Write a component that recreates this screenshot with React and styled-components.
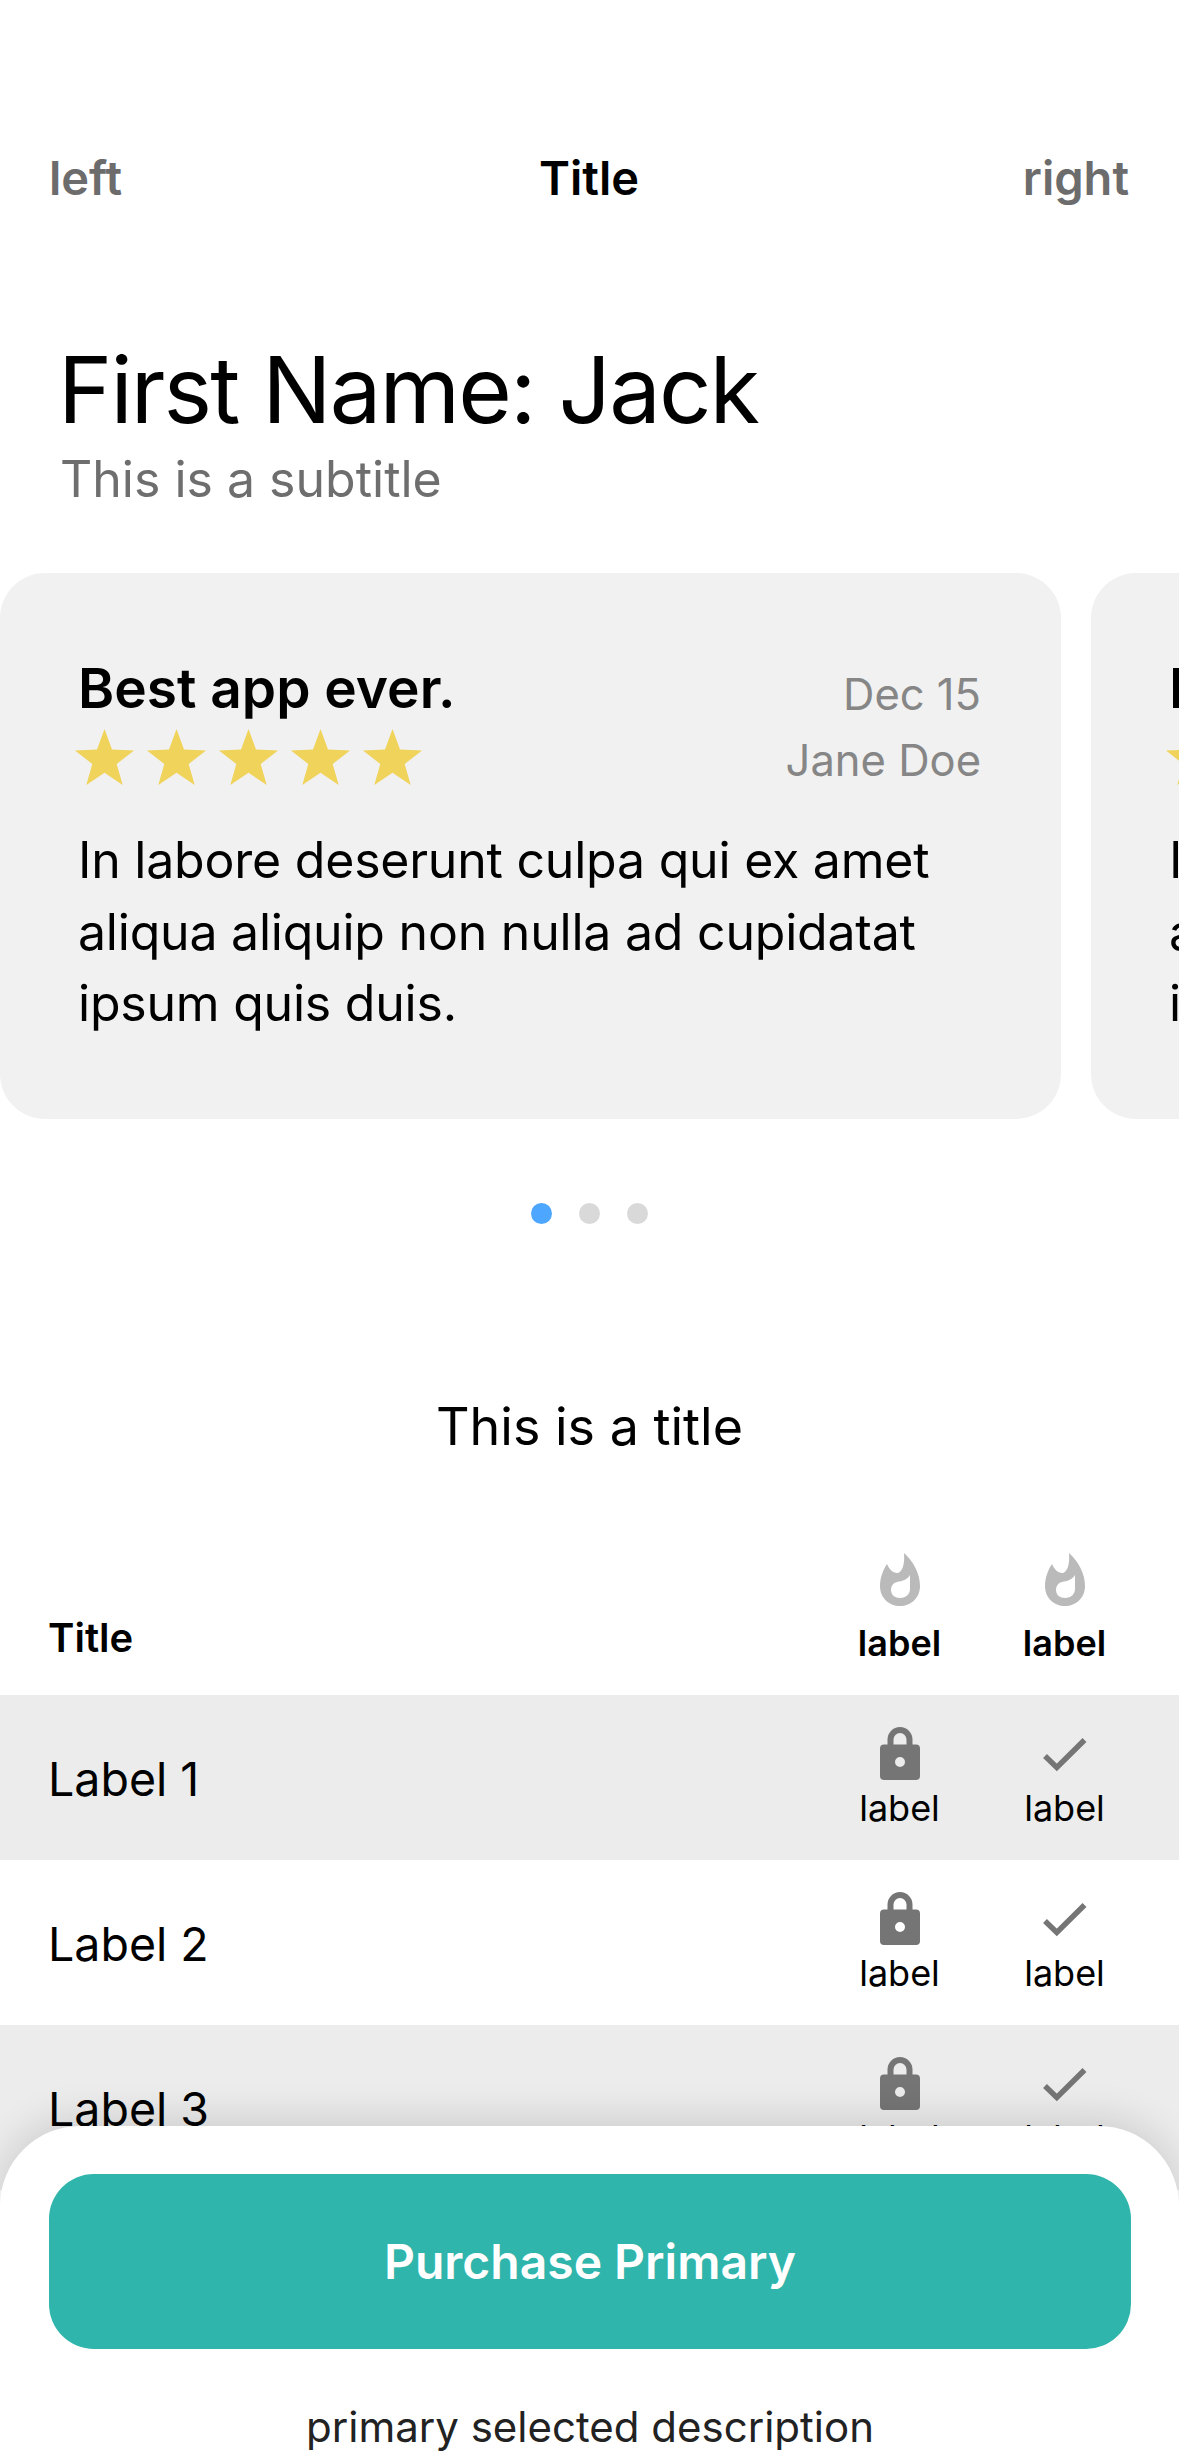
import React from 'react';
import styled, { createGlobalStyle } from 'styled-components';

const GlobalStyle = createGlobalStyle`
  html, body {
    margin: 0;
    padding: 0;
    background: #fff;
  }
  body {
    font-family: Inter, "Noto Sans", "Liberation Sans", sans-serif;
    color: #000;
  }
`;

const Page = styled.div`
  position: relative;
  width: 1179px;
  height: 2454px;
  overflow: hidden;
  background: #fff;
`;

const NavBar = styled.header`
  display: flex;
  align-items: center;
  justify-content: space-between;
  height: 114px;
  margin-top: 120px;
  padding: 0 50px 0 49px;
`;

const NavSide = styled.span`
  width: 200px;
  font-size: 47px;
  font-weight: 600;
  color: #6c6c6c;
  text-align: ${({ $align }) => $align};
`;

const NavTitle = styled.span`
  font-size: 47px;
  font-weight: 600;
  color: #000;
`;

const Intro = styled.section`
  margin-top: 106px;
  padding: 0 60px;
`;

const Heading = styled.h1`
  margin: 0 0 0 -2px;
  font-size: 92px;
  line-height: 100px;
  font-weight: 400;
  letter-spacing: -1.9px;
  color: #000;
`;

const Subtitle = styled.p`
  margin: 9px 0 0;
  font-size: 50px;
  line-height: 60px;
  color: #6e6e6e;
`;

const Carousel = styled.div`
  display: flex;
  gap: 30px;
  margin-top: 64px;
  overflow: hidden;
`;

const ReviewCard = styled.article`
  flex: 0 0 1061px;
  height: 546px;
  box-sizing: border-box;
  padding: 78px 78px 0;
  border-radius: 45px;
  background: #f1f1f1;
`;

const ReviewTop = styled.div`
  display: flex;
  justify-content: space-between;
`;

const ReviewTitle = styled.h3`
  margin: 7px 0 0;
  font-size: 55px;
  line-height: 60px;
  font-weight: 600;
`;

const Stars = styled.div`
  display: flex;
  gap: 13px;
  margin: 11px 0 0 -3px;
`;

const Meta = styled.div`
  display: flex;
  flex-direction: column;
  align-items: flex-end;
  margin: 10px 2px 0 0;
  font-size: 43.5px;
  line-height: 66px;
  color: #868686;
`;

const ReviewBody = styled.p`
  margin: 32px 0 0;
  font-size: 50px;
  line-height: 71.5px;
  letter-spacing: -0.22px;
  color: #000;
  white-space: nowrap;
`;

const Dots = styled.div`
  display: flex;
  justify-content: center;
  gap: 27px;
  margin-top: 84px;
`;

const Dot = styled.span`
  width: 21px;
  height: 21px;
  border-radius: 50%;
  background: ${({ $active }) => ($active ? '#4da6ff' : '#d9d9d9')};
`;

const SectionTitle = styled.h2`
  margin: 171px 0 0;
  font-size: 52px;
  line-height: 64px;
  font-weight: 400;
  text-align: center;
`;

const Table = styled.div`
  margin-top: 76px;
`;

const Row = styled.div`
  display: grid;
  grid-template-columns: 1fr 165px 165px;
  height: ${({ $head }) => ($head ? '160px' : '165px')};
  padding: 0 32px 0 48px;
  background: ${({ $shaded }) => ($shaded ? '#ececec' : '#fff')};
`;

const RowLabel = styled.div`
  align-self: center;
  padding-top: 2px;
  font-size: 46.5px;
`;

const HeadLabel = styled.div`
  align-self: end;
  padding-bottom: 33px;
  font-size: 40px;
  font-weight: 600;
`;

const Cell = styled.div`
  display: flex;
  flex-direction: column;
  align-items: center;
  padding-top: ${({ $head }) => ($head ? '18px' : '32px')};
`;

const IconBox = styled.div`
  display: flex;
  align-items: center;
  justify-content: center;
  height: 53px;
`;

const CellLabel = styled.span`
  margin-top: ${({ $head }) => ($head ? '15px' : '6px')};
  font-size: 36px;
  line-height: 44px;
  font-weight: ${({ $head }) => ($head ? 600 : 400)};
`;

const BottomSheet = styled.footer`
  position: absolute;
  left: 0;
  right: 0;
  bottom: 0;
  height: 328px;
  box-sizing: border-box;
  padding: 48px 48px 0 49px;
  border-radius: 80px 80px 0 0;
  background: #fff;
  box-shadow: 0 -6px 40px rgba(0, 0, 0, 0.14);
  text-align: center;
`;

const PurchaseButton = styled.button`
  display: block;
  width: 100%;
  height: 175px;
  border: none;
  border-radius: 45px;
  background: #2fb5ac;
  color: #fff;
  font-family: inherit;
  font-size: 48px;
  font-weight: 600;
`;

const Description = styled.p`
  margin: 53px 0 0;
  font-size: 42px;
  line-height: 50px;
  color: #222;
`;

const StarIcon = () => (
  <svg width="59" height="56" viewBox="0 0 59 56">
    <path
      d="M29.5 0 L37 20.5 L59 21.5 L41.7 35 L47.7 56 L29.5 43.8 L11.3 56 L17.3 35 L0 21.5 L22 20.5 Z"
      fill="#f0d35b"
    />
  </svg>
);

const FlameIcon = () => (
  <svg width="40" height="53" viewBox="0 0 40 53">
    <path
      fillRule="evenodd"
      d="M24 0 C34 9 40 21 40 33 C40 45 31 53 20 53 C9 53 0 45 0 33 C0 25 3 17 7 11 C9 16 13 20 17 20 C22 20 25 12 24 0 Z M30 22 C27 27 22 28 17 29 C13 30 11 33 11 37 C11 42 15 45 20 45 C26 45 30 41 30 36 Z"
      fill="#bababa"
    />
  </svg>
);

const LockIcon = () => (
  <svg width="40" height="53" viewBox="0 0 40 53">
    <path d="M10.5 19 V12.5 a9.5 9.5 0 0 1 19 0 V19" fill="none" stroke="#757575" strokeWidth="6" />
    <path
      fillRule="evenodd"
      d="M4 17.5 H36 a4 4 0 0 1 4 4 V49 a4 4 0 0 1 -4 4 H4 a4 4 0 0 1 -4 -4 V21.5 a4 4 0 0 1 4 -4 Z M20 30 a5 5 0 1 0 0 10 a5 5 0 1 0 0 -10 Z"
      fill="#757575"
    />
  </svg>
);

const CheckIcon = styled(({ className }) => (
  <svg className={className} width="44" height="34" viewBox="0 0 44 34">
    <path d="M2 18 L13.8 29.5 L41.5 2" fill="none" stroke="#757575" strokeWidth="5.5" />
  </svg>
))`
  margin-top: 3px;
`;

const ReviewContent = ({ title, date, author, text }) => (
  <ReviewCard>
    <ReviewTop>
      <div>
        <ReviewTitle>{title}</ReviewTitle>
        <Stars>
          {[0, 1, 2, 3, 4].map((i) => (
            <StarIcon key={i} />
          ))}
        </Stars>
      </div>
      <Meta>
        <span>{date}</span>
        <span>{author}</span>
      </Meta>
    </ReviewTop>
    <ReviewBody>{text}</ReviewBody>
  </ReviewCard>
);

const review = {
  title: 'Best app ever.',
  date: 'Dec 15',
  author: 'Jane Doe',
  text: (
    <>
      In labore deserunt culpa qui ex amet
      <br />
      aliqua aliquip non nulla ad cupidatat
      <br />
      ipsum quis duis.
    </>
  ),
};

const rows = ['Label 1', 'Label 2', 'Label 3'];

export default function App() {
  return (
    <Page>
      <GlobalStyle />
      <NavBar>
        <NavSide $align="left">left</NavSide>
        <NavTitle>Title</NavTitle>
        <NavSide $align="right">right</NavSide>
      </NavBar>

      <Intro>
        <Heading>First Name: Jack</Heading>
        <Subtitle>This is a subtitle</Subtitle>
      </Intro>

      <Carousel>
        <ReviewContent {...review} />
        <ReviewContent {...review} />
      </Carousel>

      <Dots>
        <Dot $active />
        <Dot />
        <Dot />
      </Dots>

      <SectionTitle>This is a title</SectionTitle>

      <Table>
        <Row $head>
          <HeadLabel>Title</HeadLabel>
          <Cell $head>
            <IconBox>
              <FlameIcon />
            </IconBox>
            <CellLabel $head>label</CellLabel>
          </Cell>
          <Cell $head>
            <IconBox>
              <FlameIcon />
            </IconBox>
            <CellLabel $head>label</CellLabel>
          </Cell>
        </Row>
        {rows.map((label, i) => (
          <Row key={label} $shaded={i % 2 === 0}>
            <RowLabel>{label}</RowLabel>
            <Cell>
              <IconBox>
                <LockIcon />
              </IconBox>
              <CellLabel>label</CellLabel>
            </Cell>
            <Cell>
              <IconBox>
                <CheckIcon />
              </IconBox>
              <CellLabel>label</CellLabel>
            </Cell>
          </Row>
        ))}
      </Table>

      <BottomSheet>
        <PurchaseButton>Purchase Primary</PurchaseButton>
        <Description>primary selected description</Description>
      </BottomSheet>
    </Page>
  );
}
